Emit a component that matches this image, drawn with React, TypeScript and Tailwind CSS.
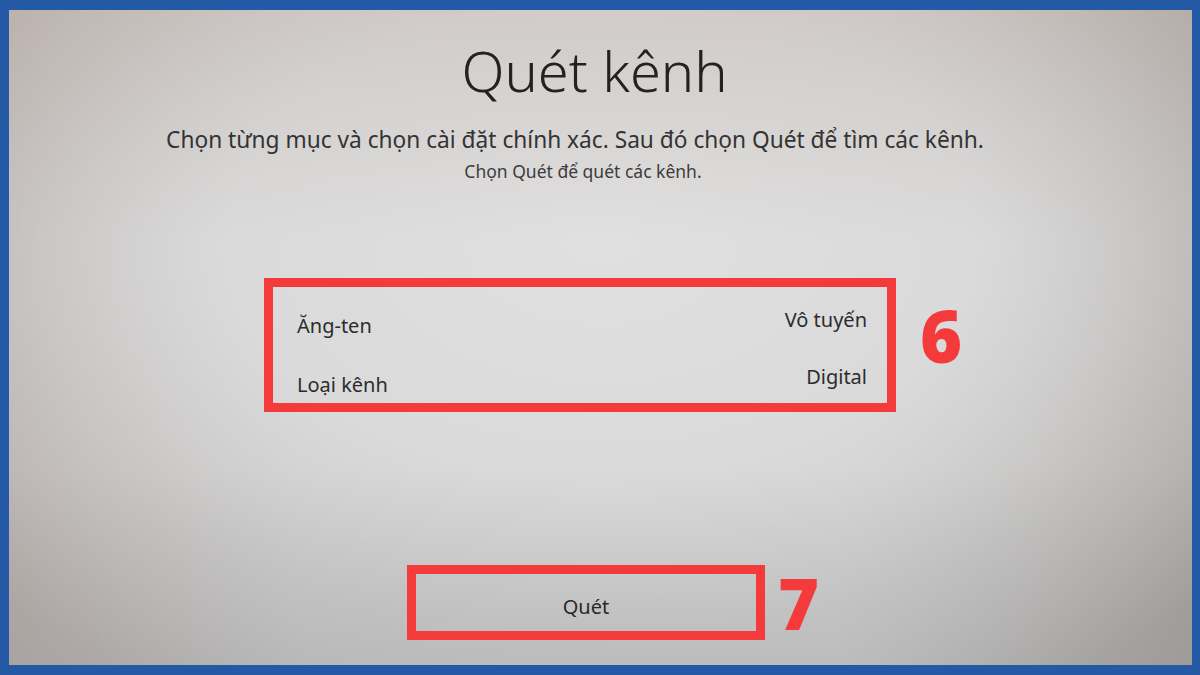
import React from 'react';

const RED = 'border-[#f53a3b]';

const SettingRow: React.FC = () => (
  <div className="flex ml-[255px] mt-[96px]">
    <div className={`w-[632px] h-[134px] border-[9px] ${RED} flex justify-between pl-[24px] pr-[20px] text-[20px] leading-[24px] text-[#2c2c2c]`}>
      <div className="flex flex-col pt-[27px] gap-[35px]">
        <span>Ăng-ten</span>
        <span>Loại kênh</span>
      </div>
      <div className="flex flex-col items-end pt-[21px] gap-[33px]">
        <span>Vô tuyến</span>
        <span>Digital</span>
      </div>
    </div>
    <span className="ml-[24px] mt-[21px] text-[72px] leading-none font-extrabold text-[#f53a3b] [font-family:'Open_Sans',sans-serif]">
      6
    </span>
  </div>
);

const ScanButton: React.FC = () => (
  <div className="flex ml-[398px] mt-[153px]">
    <div className={`w-[358px] h-[75px] border-[9px] ${RED} pt-[21px] text-center text-[20px] leading-[24px] text-[#2a2a2a]`}>
      Quét
    </div>
    <span className="ml-[13px] mt-[3px] text-[70px] leading-none font-extrabold text-[#f53a3b] [font-family:'Open_Sans',sans-serif]">
      7
    </span>
  </div>
);

export default function App() {
  return (
    <div className="w-[1200px] h-[675px] bg-[#2459a6] pt-[10px] pl-[9px] pr-[8px] pb-[10px] [font-family:'Noto_Sans',sans-serif]">
      <div className="relative h-full overflow-hidden bg-[linear-gradient(to_right,#b4aba7_0%,#c3c2c1_25%,#c8c7c6_70%,#a6a19e_100%)]">
        {/* screen glow */}
        <div className="absolute inset-0 bg-[radial-gradient(ellipse_70%_80%_at_50%_35%,#e0e0e0_0%,#dadada_45%,rgba(210,210,210,0.5)_75%,rgba(200,200,200,0)_100%)]" />
        <div className="absolute inset-0 bg-[linear-gradient(to_bottom,rgba(180,160,150,0.25)_0%,rgba(0,0,0,0)_35%,rgba(0,0,0,0)_70%,rgba(120,125,130,0.18)_100%)]" />

        <div className="relative flex flex-col">
          <h1 className="self-center pt-[32px] text-[56px] leading-[56px] font-light text-[#222] ml-[-12px]">
            Quét kênh
          </h1>
          <p className="self-center mt-[28px] text-[22.7px] leading-[28px] text-[#333] ml-[-51px]">
            Chọn từng mục và chọn cài đặt chính xác. Sau đó chọn Quét để tìm các kênh.
          </p>
          <p className="self-center mt-[7px] text-[17.5px] leading-[21px] text-[#3c3c3c] ml-[-35px]">
            Chọn Quét để quét các kênh.
          </p>

          <SettingRow />
          <ScanButton />
        </div>
      </div>
    </div>
  );
}
